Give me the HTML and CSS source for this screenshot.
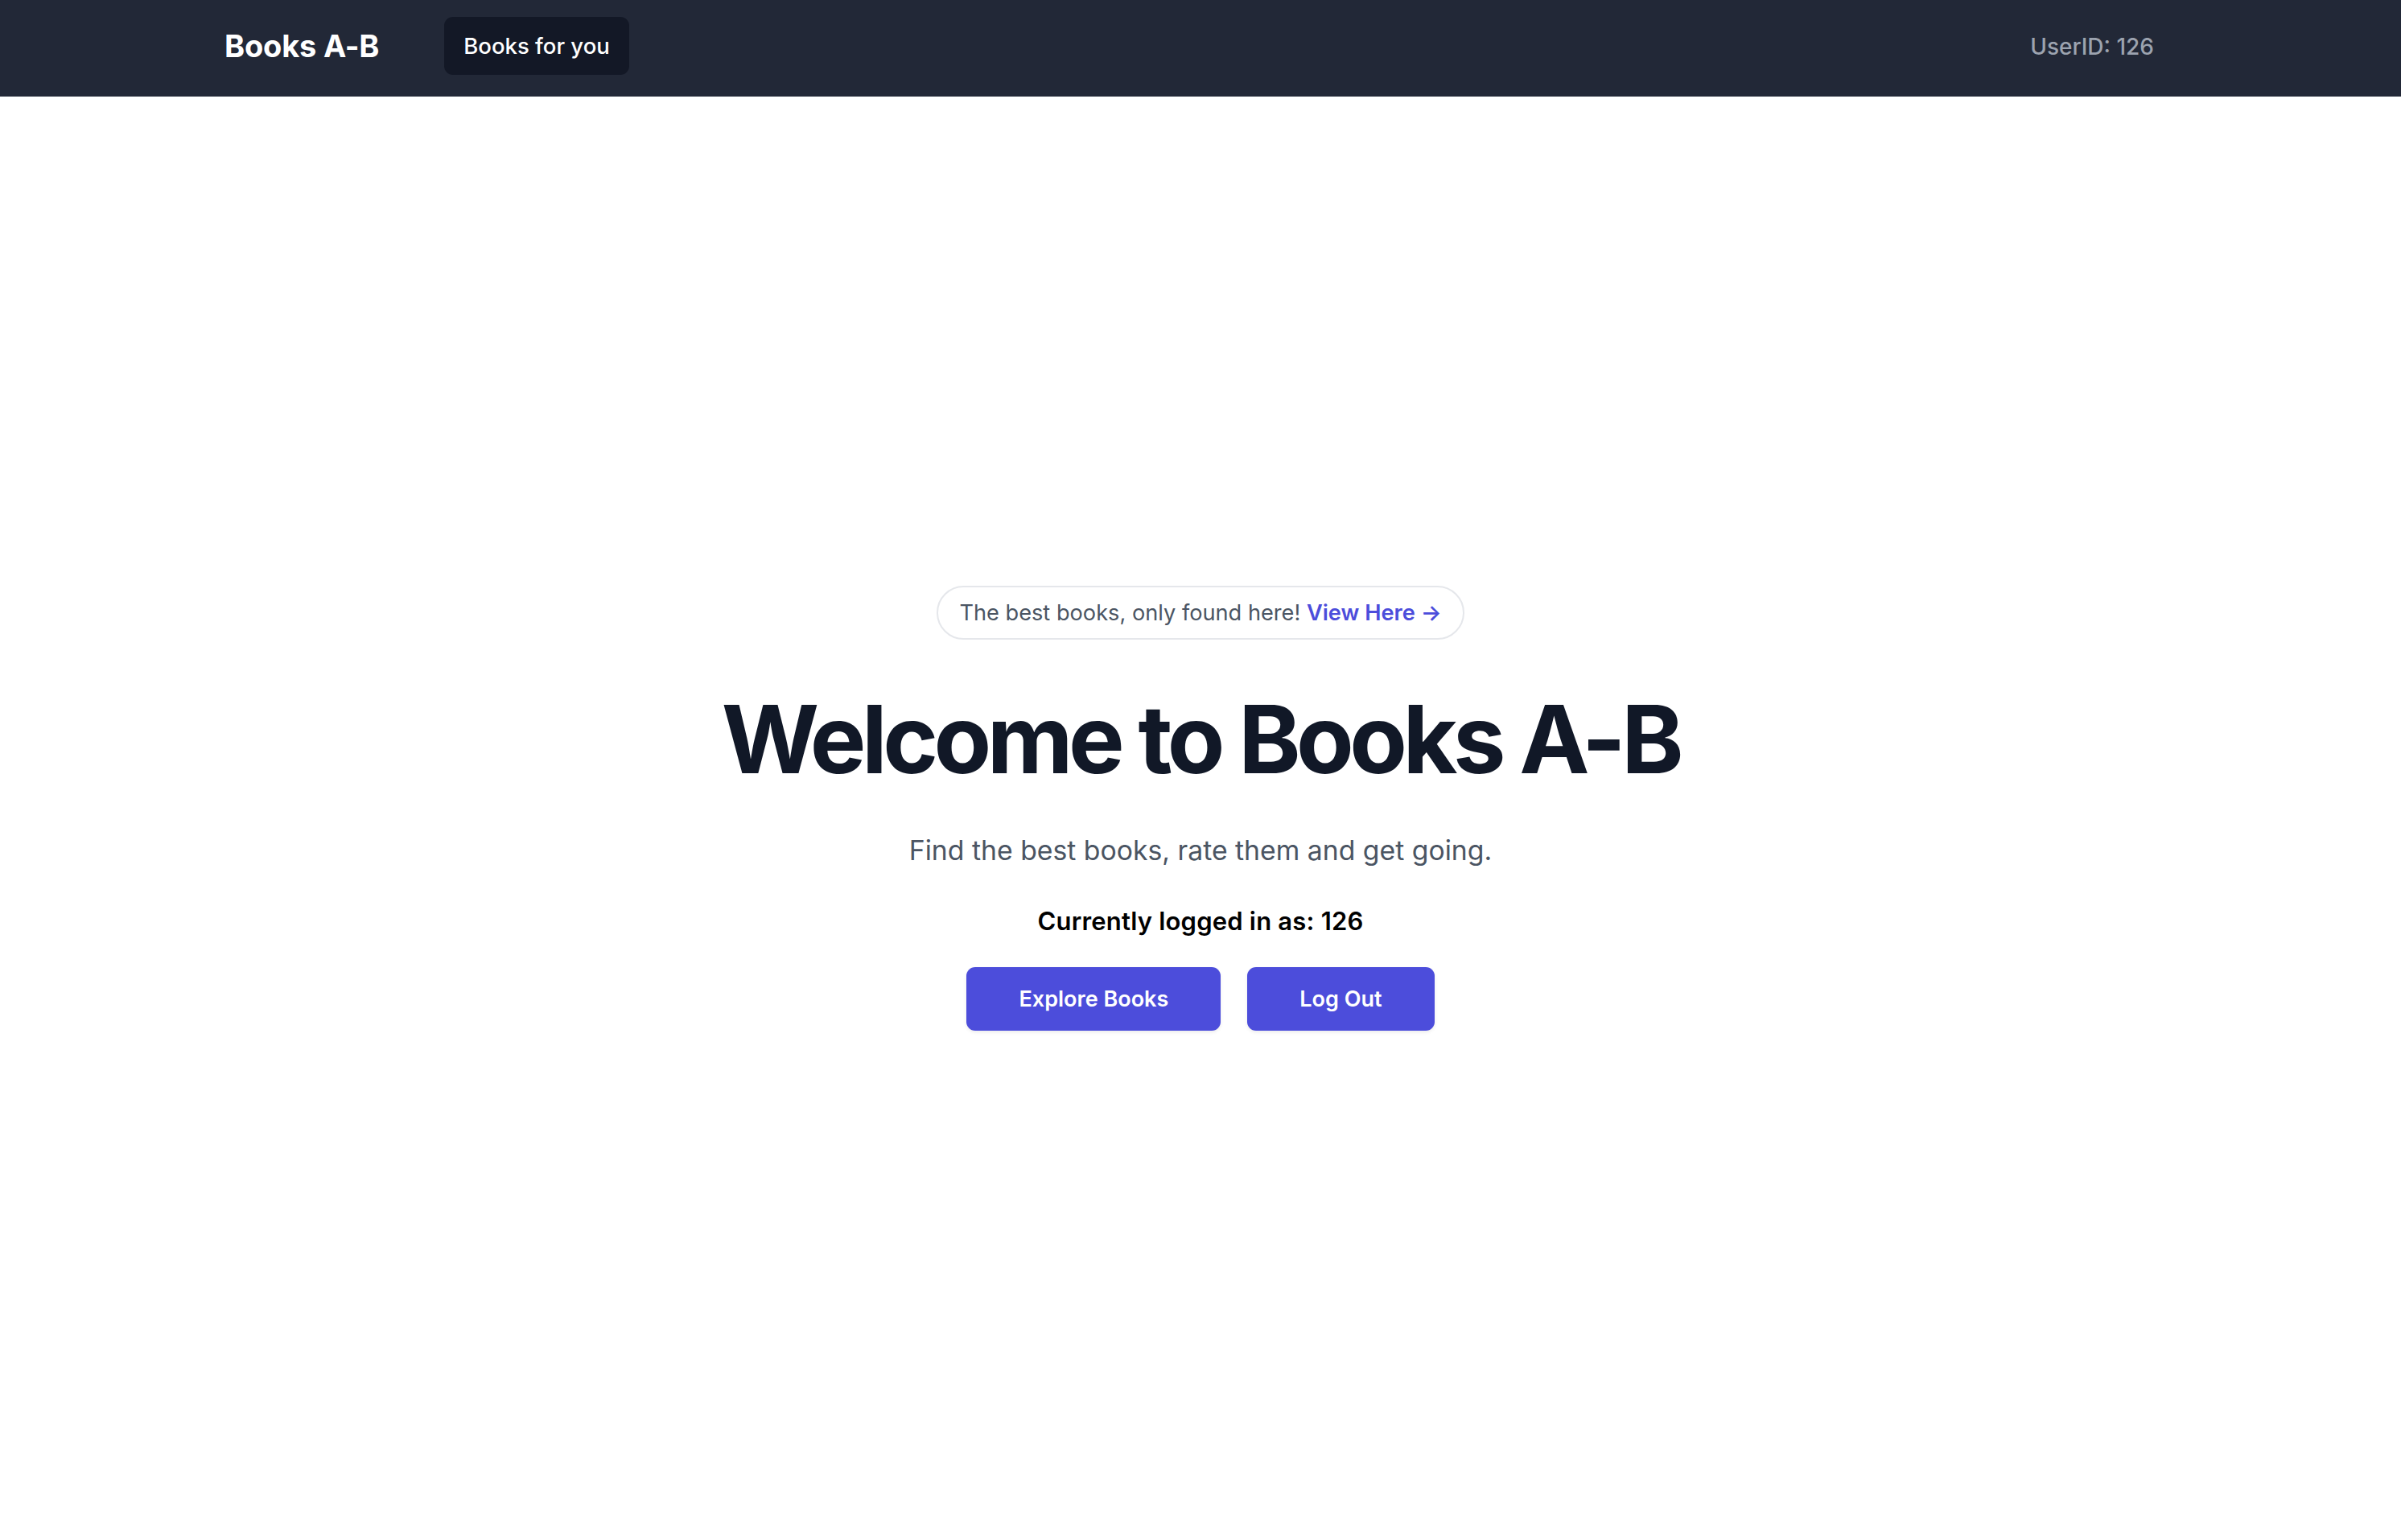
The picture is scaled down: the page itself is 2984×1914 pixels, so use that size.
FILE: index.html
```html
<!DOCTYPE html>
<html lang="en">
<head>
<meta charset="utf-8">
<title>Books A-B</title>
<link rel="stylesheet" href="styles.css">
</head>
<body>
<nav class="nav">
  <div class="nav-inner">
    <div class="nav-left">
      <span class="logo">Books A-B</span>
      <a class="nav-btn" href="#">Books for you</a>
    </div>
    <span class="userid">UserID: 126</span>
  </div>
</nav>
<main class="hero">
  <div class="pill">The best books, only found here! <a class="pill-link" href="#">View Here <span class="arrow">&rarr;</span></a></div>
  <h1 class="title">Welcome to Books A-B</h1>
  <p class="subtitle">Find the best books, rate them and get going.</p>
  <p class="logged">Currently logged in as: 126</p>
  <div class="actions">
    <a class="btn" href="#">Explore Books</a>
    <a class="btn" href="#">Log Out</a>
  </div>
</main>
</body>
</html>
```

FILE: styles.css
```css
* { box-sizing: border-box; }
html, body { margin: 0; padding: 0; }
body {
  font-family: Inter, "Noto Sans", "Liberation Sans", sans-serif;
  background: #ffffff;
  width: 2984px;
  min-height: 1914px;
}
a { text-decoration: none; }

.nav {
  background: #222837;
  height: 120px;
}
.nav-inner {
  height: 113px;
  display: flex;
  align-items: center;
  justify-content: space-between;
  padding: 0 307px 0 279px;
}
.nav-left {
  display: flex;
  align-items: center;
  gap: 81px;
}
.logo {
  color: #ffffff;
  font-size: 38px;
  font-weight: 700;
  line-height: 50px;
  letter-spacing: -0.2px;
}
.nav-btn {
  display: flex;
  align-items: center;
  height: 72px;
  padding: 0 24px;
  background: #131826;
  border-radius: 11px;
  color: #ffffff;
  font-size: 27.5px;
  font-weight: 500;
}
.userid {
  color: #9ca3af;
  font-size: 28px;
  font-weight: 500;
  padding-top: 3px;
}

.hero {
  display: flex;
  flex-direction: column;
  align-items: center;
  padding-top: 608px;
}
.pill {
  height: 67px;
  padding: 0 26px;
  border: 2px solid #e5e7eb;
  border-radius: 999px;
  display: flex;
  align-items: center;
  font-size: 27.2px;
  line-height: 45px;
  color: #4b5563;
  white-space: pre;
}
.pill-link {
  color: #4c4ddb;
  font-weight: 600;
}
.title {
  margin: 65px 0 0;
  font-size: 117px;
  line-height: 117px;
  font-weight: 700;
  letter-spacing: -5.5px;
  color: #111827;
}
.subtitle {
  margin: 50px 0 0;
  font-size: 33.75px;
  line-height: 60px;
  color: #4b5563;
}
.logged {
  margin: 35px 0 0;
  font-size: 31px;
  line-height: 45px;
  font-weight: 600;
  letter-spacing: 0.2px;
  color: #000000;
}
.actions {
  margin-top: 35px;
  display: flex;
  gap: 33px;
}
.btn {
  display: flex;
  align-items: center;
  height: 79px;
  padding: 0 65px;
  background: #4c4ddb;
  color: #ffffff;
  border-radius: 11px;
  font-size: 27px;
  font-weight: 600;
  box-shadow: 0 2px 4px rgba(0,0,0,0.08);
}
```
